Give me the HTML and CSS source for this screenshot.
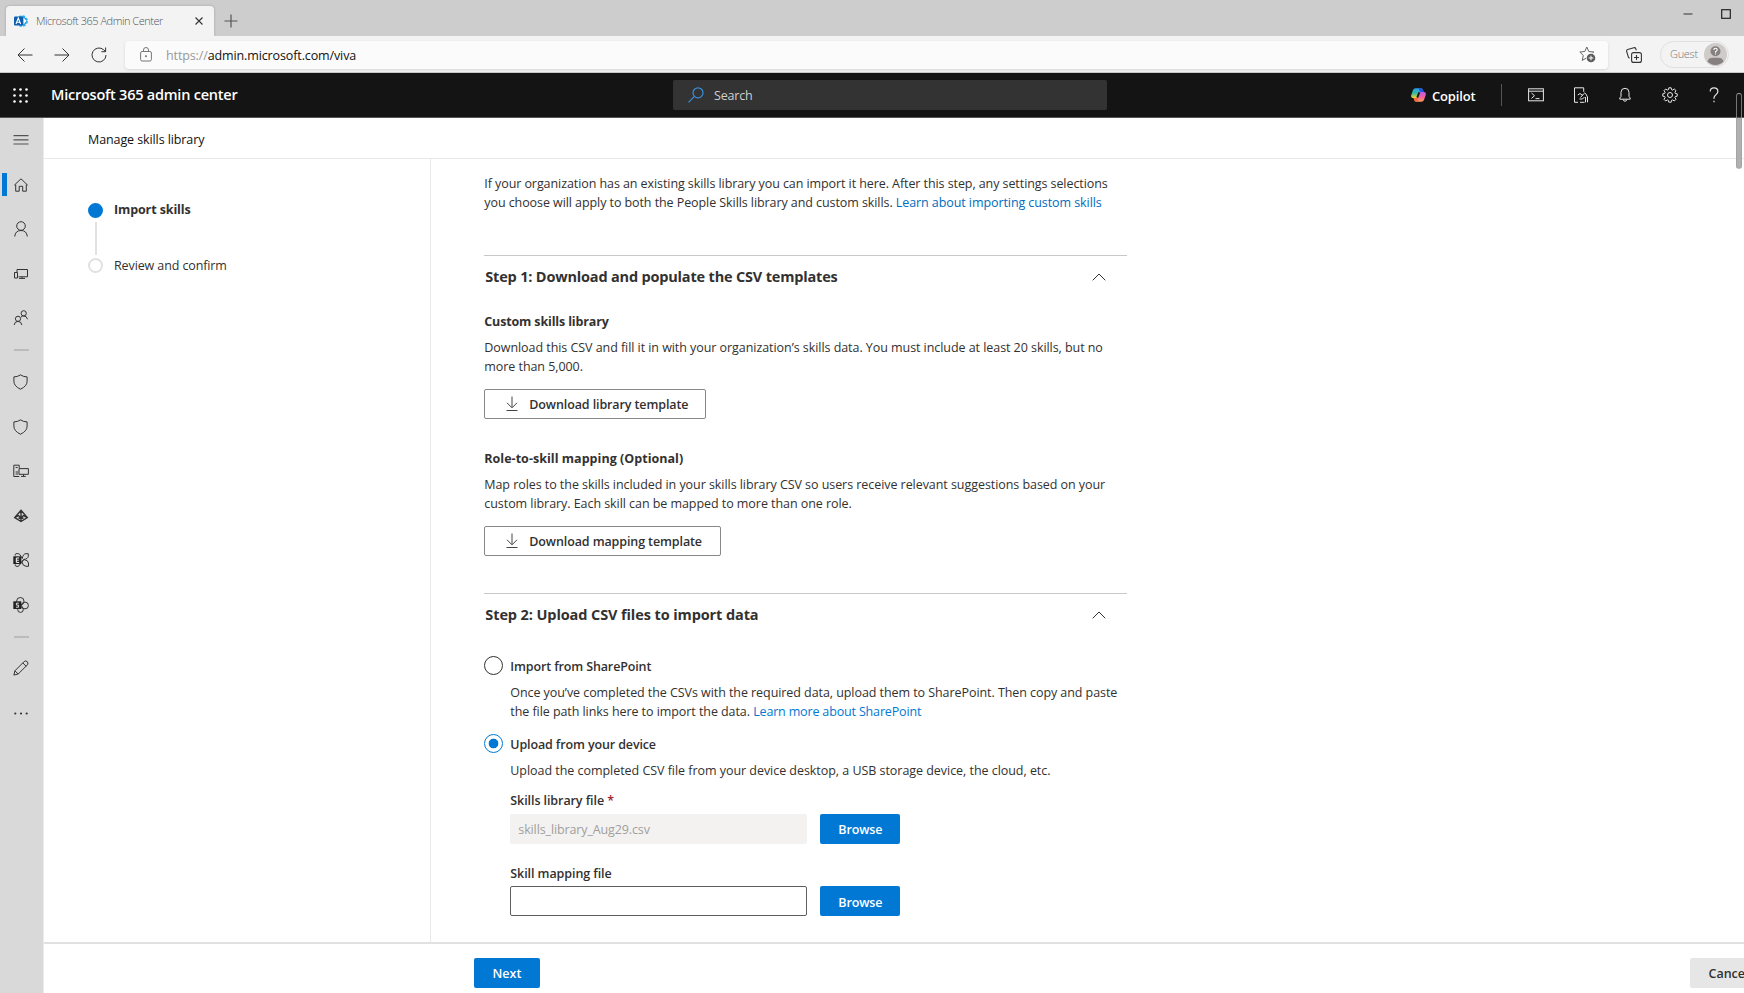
FILE: index.html
```html
<!DOCTYPE html>
<html lang="en">
<head>
    <meta charset="UTF-8">
    <meta name="viewport" content="width=device-width, initial-scale=1.0">
    <title>Microsoft 365 Admin Center</title>
    <link rel="stylesheet" href="styles.css">
</head>
<body>

    <div class="tabstrip">
        <div class="tab">
            <svg class="tab-icon" width="14" height="14" viewBox="0 0 14 14">
                <circle cx="8" cy="7" r="4.6" fill="#2fc4f3" stroke="#2fb4ee" stroke-width="2.6" stroke-dasharray="2.4 1.2"/>
                <circle cx="8.2" cy="7" r="4.4" fill="#1c8fdc"/>
                <path d="M9.5 3.5l3 3.5-3 3.5z" fill="#fff"/>
                <rect x="0" y="2.6" width="9" height="9" rx="1" fill="#0f5fb0"/>
                <path d="M2 10l2.3-6 2.3 6M2.8 8.2h3" fill="none" stroke="#fff" stroke-width="1.1"/>
            </svg>
            <span class="tab-title">Microsoft 365 Admin Center</span>
            <svg width="8" height="8" viewBox="0 0 8 8"><path d="M.5.5l7 7M7.5.5l-7 7" stroke="#333" stroke-width="1.1"/></svg>
        </div>
        <svg class="new-tab" width="14" height="14" viewBox="0 0 14 14"><path d="M7 .5v13M.5 7h13" stroke="#555" stroke-width="1.2"/></svg>
        <div class="window-buttons">
            <svg width="10" height="10" viewBox="0 0 10 10"><path d="M.5 5h9" stroke="#333"/></svg>
            <svg width="10" height="10" viewBox="0 0 10 10"><rect x=".7" y=".7" width="8.6" height="8.6" fill="none" stroke="#222" stroke-width="1.2"/></svg>
        </div>
    </div>

    <div class="toolbar">
        <div class="nav-buttons">
            <svg width="16" height="16" viewBox="0 0 16 16"><path d="M15.5 8H1M7.5 1.5L1 8l6.5 6.5"/></svg>
            <svg width="16" height="16" viewBox="0 0 16 16"><path d="M.5 8H15M8.5 1.5L15 8l-6.5 6.5"/></svg>
            <svg width="16" height="16" viewBox="0 0 16 16"><path d="M15 8a7 7 0 1 1-2.3-5.2L14.5 4.5M14.6.5v4.2h-4.2"/></svg>
        </div>
        <div class="address">
            <svg width="12" height="15" viewBox="0 0 12 15" fill="none" stroke="#777"><rect x=".6" y="4.5" width="10.8" height="9.5" rx="1.5"/><path d="M3.5 4.5V3a2.5 2.5 0 0 1 5 0v1.5"/><circle cx="6" cy="9.2" r=".6" fill="#555"/></svg>
            <span class="url"><span class="scheme">https://</span>admin.microsoft.com/viva</span>
            <svg class="star" width="17" height="17" viewBox="0 0 17 17">
                <path d="M7.8 1l2 4.5 5 .5-3.7 3.4 1 5-4.3-2.6-4.5 2.6 1-5L.8 6l5-.5z" fill="none" stroke="#666"/>
                <circle cx="12" cy="12" r="5" fill="#fbfbfb"/>
                <circle cx="12" cy="12" r="4.3" fill="#5c5c5c"/>
                <path d="M12 9.7v4.6M9.7 12h4.6" stroke="#fff"/>
            </svg>
        </div>
        <svg class="collections" width="16" height="16" viewBox="0 0 16 16" fill="none" stroke="#333" stroke-width="1.1">
            <rect x="5.6" y="5.6" width="9.8" height="9.8" rx="2"/>
            <path d="M10.5 8v5M8 10.5h5M3.6 11.2L2.5 10.5.7 4.6Q.3 3 1.7 2.5L7.8.7Q9.3.4 9.8 1.6L10.3 3.3"/>
        </svg>
        <div class="guest">
            <span>Guest</span>
            <svg width="23" height="23" viewBox="0 0 23 23">
                <circle cx="11.5" cy="11.5" r="11.5" fill="#cfcbc8"/>
                <circle cx="11.5" cy="8.3" r="5" fill="#868180"/>
                <path d="M3.5 18.5c1-3.5 3-3.8 8-3.8s7 .3 8 3.8a11 11 0 0 1-16 0z" fill="#868180"/>
                <path d="M9.8 7q0-1.7 1.7-1.7t1.7 1.5q0 1-1.7 2v.9M11.5 10.5v1" fill="none" stroke="#fff" stroke-width="1.1"/>
            </svg>
        </div>
    </div>

    <header class="suite">
        <svg class="waffle" width="15" height="15" viewBox="0 0 15 15" fill="#fff">
            <circle cx="1.5" cy="1.5" r="1.3"/><circle cx="7.5" cy="1.5" r="1.3"/><circle cx="13.5" cy="1.5" r="1.3"/>
            <circle cx="1.5" cy="7.5" r="1.3"/><circle cx="7.5" cy="7.5" r="1.3"/><circle cx="13.5" cy="7.5" r="1.3"/>
            <circle cx="1.5" cy="13.5" r="1.3"/><circle cx="7.5" cy="13.5" r="1.3"/><circle cx="13.5" cy="13.5" r="1.3"/>
        </svg>
        <span class="suite-name">Microsoft 365 admin center</span>
        <div class="search">
            <svg width="16" height="16" viewBox="0 0 16 16" fill="none" stroke="#3b8edb" stroke-width="1.2"><circle cx="10" cy="5.8" r="5"/><path d="M6.4 9.4L.5 15.3"/></svg>
            <span>Search</span>
        </div>
        <div class="suite-right">
            <div class="copilot">
                <svg width="15" height="14" viewBox="0 0 15 14">
                    <defs>
                        <linearGradient id="cool" x1="0" y1="0" x2="0" y2="1"><stop offset="0" stop-color="#2a9df4"/><stop offset=".5" stop-color="#31b8a0"/><stop offset="1" stop-color="#f4d52c"/></linearGradient>
                        <linearGradient id="warm" x1="0" y1="0" x2="0" y2="1"><stop offset="0" stop-color="#b35cf0"/><stop offset=".5" stop-color="#f2609e"/><stop offset="1" stop-color="#ff9a5a"/></linearGradient>
                    </defs>
                    <path d="M4.5.3H10q1.5 0 2 1.7l.6 2H9.5q-1 0-1.4 1.3L6.7 10H2Q-.4 10 .2 7.3L2 2Q2.7.3 4.5.3z" fill="url(#cool)"/>
                    <path d="M7.5.3H10q1.5 0 2 1.7l.6 2H9.2z" fill="#1f55d6"/>
                    <path d="M10.5 13.7H5.2q-1.5 0-2-1.7L2.6 10h3q1 0 1.4-1.3L8.5 4H13q2.4 0 1.8 2.7L13 12q-.7 1.7-2.5 1.7z" fill="url(#warm)"/>
                    <path d="M2.6 10h3.6l1.3 3.7H5.2q-1.5 0-2-1.7z" fill="#f26a3c"/>
                    <path d="M6.2 9.7L8.3 4.3" stroke="#141414" stroke-width="1.8"/>
                </svg>
                <span>Copilot</span>
            </div>
            <div class="suite-icons">
                <svg width="16" height="14" viewBox="0 0 16 14"><rect x=".6" y=".8" width="14.8" height="12"/><path d="M.6 3.2h14.8M3.5 5l3 2.7-3 2.7M7.5 10.6h4"/></svg>
                <svg width="16" height="16" viewBox="0 0 16 16"><path d="M5 15.3H1.5V.8h9.2v4M7 15.3h4.5M12.5 15.3V10M4.8 8l2.2-1.5 2.8 2M7.5 10.5l3-3.5q1.5-2 2.2-.3L14.5 10v5.3M6.5 12h3l2-2"/></svg>
                <svg width="16" height="16" viewBox="0 0 16 16"><path d="M2.8 12.2V11L4 9.5V5.3a4 4 0 0 1 8 0v4.2l1.2 1.5v1.2zM6.3 12.5a1.7 1.7 0 0 0 3.4 0"/></svg>
                <svg width="16" height="16" viewBox="0 0 16 16"><path d="M6.8.8h2.4l.4 1.9 1 .4 1.7-1.1 1.7 1.7-1.1 1.7.4 1 1.9.4v2.4l-1.9.4-.4 1 1.1 1.7-1.7 1.7-1.7-1.1-1 .4-.4 1.9H6.8l-.4-1.9-1-.4-1.7 1.1L2 12.3l1.1-1.7-.4-1L.8 9.2V6.8l1.9-.4.4-1L2 3.7 3.7 2l1.7 1.1 1-.4z"/><circle cx="8" cy="8" r="2.5"/></svg>
                <svg width="16" height="16" viewBox="0 0 16 16"><path d="M4.2 4.6Q4.2.8 8 .8t3.9 3.5Q11.9 6 10 7.6T8 10.8v1M8 13.8v1.4" stroke-width="1.2"/></svg>
            </div>
        </div>
    </header>

    <div class="app">
        <nav class="rail">
            <div class="rail-item"><svg width="16" height="16" viewBox="0 0 16 16"><path d="M.5 3.7h15M.5 7.9h15"/><path d="M.5 12h15" stroke="#777" stroke-width="1.4"/></svg></div>
            <div class="rail-item active"><svg width="16" height="16" viewBox="0 0 16 16"><path d="M1.3 8.2L8 1.8l6.7 6.4M2.7 7.5v6.7h3.5V9.3h3.5v4.9h3.6V7.5"/></svg></div>
            <div class="rail-item"><svg width="16" height="16" viewBox="0 0 16 16"><circle cx="8" cy="5" r="4.3"/><path d="M1.7 15.5q.6-6 6.3-6t6.3 6"/></svg></div>
            <div class="rail-item"><svg width="16" height="16" viewBox="0 0 16 16"><path d="M4 6V3.5h10.5v7.3H5.5M1.5 6.5h3v5.5h-3zM6 12.4h6M9 10.8v1.6"/></svg></div>
            <div class="rail-item"><svg width="16" height="16" viewBox="0 0 16 16"><circle cx="10.7" cy="3.3" r="2.6"/><circle cx="5" cy="8.8" r="2.6"/><path d="M1.2 15q.3-3.6 3.8-3.6T8.8 15M8 7.2q.8-1.3 2.7-1.3 3 0 3.8 3.3"/></svg></div>
            <div class="rail-line"></div>
            <div class="rail-item"><svg width="16" height="16" viewBox="0 0 16 16"><path d="M7.5.9Q4.5 2.9.9 2.9v4.3q0 5 6.600 8 6.600-3 6.600-8V2.900Q10.500 2.900 7.500.9z"/></svg></div>
            <div class="rail-item"><svg width="16" height="16" viewBox="0 0 16 16"><path d="M7.5.9Q4.5 2.9.9 2.9v4.3q0 5 6.600 8 6.600-3 6.600-8V2.900Q10.500 2.900 7.500.9z"/></svg></div>
            <div class="rail-item"><svg width="16" height="16" viewBox="0 0 16 16"><path d="M6.2 5V2.2H.8v11.3h5.4M6 5.6h9.4v5.7H6zM2.6 4.5h2M2.6 9h2.6M2.6 11h2.6M10.5 11.3v2M8 13.4h4.8"/></svg></div>
            <div class="rail-item"><svg width="16" height="16" viewBox="0 0 16 16"><path d="M8 2.3l6.3 7.2L8 13.5 1.7 9.5zM8 2.5v11M2 9.3l3.6-1.8L8 10l2.4-2.5L14 9.3M5.5 10.3h5" stroke-width="1.4"/></svg></div>
            <div class="rail-item">
                <svg width="16" height="16" viewBox="0 0 16 16"><path d="M9.3 6.5L6.8 2.5Q6 1.6 4.8 1.6H3q-1 .2-.8 2M9.3 6.5Q10 1.7 13 1.7h2.3v2.6Q15 7 10.5 7.5L5.5 14.3H3q-1-.3-.8-2M9 10l2-2.5q4.3.8 4.5 3.5v3.3H13Q9.5 14 9 10z"/><rect x=".3" y="4.3" width="8" height="7.7" fill="#222" stroke="none"/><path d="M6.2 6H3.3v4.4h2.9M3.3 8.2h2.5" stroke="#fff"/></svg>
            </div>
            <div class="rail-item">
                <svg width="16" height="16" viewBox="0 0 16 16"><circle cx="7.3" cy="4.2" r="3.7"/><circle cx="12" cy="8.5" r="3.4"/><circle cx="7.5" cy="12.6" r="2.8"/><rect x=".3" y="4.3" width="8" height="7.7" fill="#222" stroke="none"/><path d="M5.8 6.2H3.4v1.9h2.2v2.1H3" stroke="#ddd"/></svg>
            </div>
            <div class="rail-line"></div>
            <div class="rail-item"><svg width="16" height="16" viewBox="0 0 16 16"><path d="M.9 15.1l1-4.3 9.3-9.3q1.6-1.2 3 .1t.3 3.1l-9.3 9.3zM9.8 2.9l3.4 3.4M1.9 10.8l3.3 3.2"/></svg></div>
            <div class="rail-item"><svg width="16" height="16" viewBox="0 0 16 16"><g fill="#333" stroke="none"><circle cx="2.3" cy="8.5" r="1.1"/><circle cx="8" cy="8.5" r="1.1"/><circle cx="13.7" cy="8.5" r="1.1"/></g></svg></div>
        </nav>

        <div class="page">
            <div class="page-title">Manage skills library</div>

            <div class="page-body">
                <aside class="steps">
                    <div class="step current"><span class="dot"></span><span>Import skills</span></div>
                    <div class="step-line"></div>
                    <div class="step"><span class="dot"></span><span>Review and confirm</span></div>
                </aside>

                <main class="content">
                    <p class="intro">If your organization has an existing skills library you can import it here. After this step, any settings selections<br>you choose will apply to both the People Skills library and custom skills. <a href="#">Learn about importing custom skills</a></p>

                    <section class="section">
                        <div class="section-head download-head">
                            <h2>Step 1: Download and populate the CSV templates</h2>
                            <svg width="14" height="8" viewBox="0 0 14 8"><path d="M.7 7.3L7 1l6.3 6.3"/></svg>
                        </div>
                        <div class="template">
                            <h3>Custom skills library</h3>
                            <p>Download this CSV and fill it in with your organization’s skills data. You must include at least 20 skills, but no<br>more than 5,000.</p>
                            <button class="btn-outline library">
                                <svg width="12" height="16" viewBox="0 0 12 16"><path d="M6 .5v11M1 6.8l5 5 5-5M.5 14.5h11"/></svg>
                                <span>Download library template</span>
                            </button>
                        </div>
                        <div class="template">
                            <h3 class="role-title">Role-to-skill mapping (Optional)</h3>
                            <p>Map roles to the skills included in your skills library CSV so users receive relevant suggestions based on your<br>custom library. Each skill can be mapped to more than one role.</p>
                            <button class="btn-outline mapping">
                                <svg width="12" height="16" viewBox="0 0 12 16"><path d="M6 .5v11M1 6.8l5 5 5-5M.5 14.5h11"/></svg>
                                <span>Download mapping template</span>
                            </button>
                        </div>
                    </section>

                    <section class="section">
                        <div class="section-head">
                            <h2>Step 2: Upload CSV files to import data</h2>
                            <svg width="14" height="8" viewBox="0 0 14 8"><path d="M.7 7.3L7 1l6.3 6.3"/></svg>
                        </div>
                        <div class="option">
                            <span class="radio"></span>
                            <div>
                                <div class="option-label">Import from SharePoint</div>
                                <p>Once you’ve completed the CSVs with the required data, upload them to SharePoint. Then copy and paste<br>the file path links here to import the data. <a href="#" class="bright">Learn more about SharePoint</a></p>
                            </div>
                        </div>
                        <div class="option">
                            <span class="radio checked"></span>
                            <div>
                                <div class="option-label">Upload from your device</div>
                                <p class="hint">Upload the completed CSV file from your device desktop, a USB storage device, the cloud, etc.</p>
                                <div class="field">
                                    <label>Skills library file <span class="required">*</span></label>
                                    <div class="field-row">
                                        <div class="input disabled">skills_library_Aug29.csv</div>
                                        <button class="btn-primary browse">Browse</button>
                                    </div>
                                </div>
                                <div class="field">
                                    <label>Skill mapping file</label>
                                    <div class="field-row">
                                        <div class="input"></div>
                                        <button class="btn-primary browse">Browse</button>
                                    </div>
                                </div>
                            </div>
                        </div>
                    </section>
                </main>
            </div>

            <footer class="footer">
                <button class="btn-primary next">Next</button>
                <button class="btn-cancel">Cancel</button>
            </footer>
        </div>
    </div>

    <div class="scroll-thumb"></div>

</body>
</html>
```

FILE: styles.css
```css
* {
    box-sizing: border-box;
}
body {
    margin: 0;
    width: 1744px;
    height: 993px;
    overflow: hidden;
    display: flex;
    flex-direction: column;
    font-family: "Open Sans", "Noto Sans", sans-serif;
    font-size: 12.5px;
    line-height: 18.6px;
    color: #323130;
    background: #fff;
}
svg {
    display: block;
    flex: none;
}
p, h2, h3 {
    margin: 0;
}
a {
    color: #006cbe;
    text-decoration: none;
}
a.bright {
    color: #0078d4;
    letter-spacing: -0.16px;
}
button {
    font-family: inherit;
    border: none;
    border-radius: 2px;
    padding: 0;
}

/* browser window */
.tabstrip {
    height: 36px;
    flex: none;
    display: flex;
    align-items: flex-end;
    padding-left: 6px;
    background: #cdcdcd;
}
.tab {
    width: 208px;
    height: 30px;
    display: flex;
    align-items: center;
    padding: 0 11px 0 8px;
    background: #f3f3f3;
    border-radius: 4px 4px 0 0;
    box-shadow: 0 0 3px rgba(0, 0, 0, 0.2);
}
.tab-title {
    flex: 1;
    margin-left: 8px;
    font-size: 11px;
    font-weight: 300;
    letter-spacing: -0.47px;
    color: #555;
    white-space: nowrap;
}
.new-tab {
    margin: 0 0 8px 10px;
}
.window-buttons {
    display: flex;
    gap: 28px;
    margin: 0 13px 17px auto;
}
.toolbar {
    height: 37px;
    flex: none;
    display: flex;
    align-items: center;
    padding: 1px 15px 0 17px;
    background: #f3f3f3;
    border-bottom: 1px solid #c8c8c8;
}
.nav-buttons {
    display: flex;
    gap: 21px;
    fill: none;
    stroke: #333;
}
.address {
    width: 1483px;
    height: 28px;
    margin-left: 18px;
    display: flex;
    align-items: center;
    padding: 0 12px 0 15px;
    background: #fbfbfb;
    border-radius: 4px;
    box-shadow: 0 1px 3px rgba(0, 0, 0, 0.12);
}
.url {
    flex: 1;
    margin-left: 14px;
    padding-top: 3px;
    letter-spacing: -0.12px;
    color: #111;
}
.scheme {
    color: #999;
}
.collections {
    margin-left: 18px;
}
.guest {
    width: 69px;
    height: 27px;
    margin-left: auto;
    display: flex;
    align-items: center;
    justify-content: space-between;
    padding: 0 1px 0 9px;
    border: 1px solid #e0e0e0;
    border-radius: 14px;
    font-size: 11px;
    font-weight: 300;
    letter-spacing: -0.3px;
    color: #777;
}

/* suite header */
.suite {
    height: 45px;
    flex: none;
    display: flex;
    align-items: center;
    padding: 0 22px 0 13px;
    background: #141414;
    border-bottom: 1px solid #555;
    color: #fff;
}
.suite-name {
    width: 300px;
    margin-left: 23px;
    font-size: 14.5px;
    font-weight: 600;
    letter-spacing: -0.23px;
}
.search {
    width: 434px;
    height: 30px;
    margin-left: 322px;
    display: flex;
    align-items: center;
    gap: 10px;
    padding-left: 15px;
    background: #333;
    border-radius: 2px;
    color: #d0d0d0;
}
.search span {
    padding-top: 2px;
    letter-spacing: -0.2px;
}
.suite-right {
    margin-left: auto;
    display: flex;
    align-items: center;
}
.copilot {
    width: 91px;
    height: 22px;
    display: flex;
    align-items: center;
    gap: 6px;
    border-right: 1px solid #555;
    font-size: 13px;
    font-weight: 600;
    letter-spacing: -0.15px;
}
.copilot span {
    padding-top: 2px;
}
.suite-icons {
    display: flex;
    align-items: center;
    gap: 28.5px;
    margin-left: 26px;
    fill: none;
    stroke: #e6e6e6;
}

/* left rail */
.app {
    flex: 1;
    min-height: 0;
    display: flex;
}
.rail {
    width: 44px;
    flex: none;
    background: #d9d9d9;
    border-right: 1px solid #ebebeb;
    fill: none;
    stroke: #333;
}
.rail-item {
    height: 44.55px;
    display: flex;
    align-items: center;
    padding-left: 13px;
}
.rail-item.active {
    padding-left: 2px;
}
.rail-item.active::before {
    content: "";
    width: 5px;
    height: 23px;
    margin-right: 6px;
    background: #0078d4;
}
.rail-line {
    height: 2px;
    width: 15px;
    margin: 8.5px 0 8.6px 14px;
    background: #bbb;
}

/* page */
.page {
    flex: 1;
    min-width: 0;
    display: flex;
    flex-direction: column;
}
.page-title {
    height: 41px;
    flex: none;
    padding: 13px 0 0 44px;
    border-bottom: 1px solid #e8e8e8;
    letter-spacing: -0.1px;
    color: #111;
}
.page-body {
    flex: 1;
    min-height: 0;
    display: flex;
}
.steps {
    width: 387px;
    padding: 42px 0 0 44px;
    border-right: 1px solid #e8e8e8;
    letter-spacing: -0.11px;
}
.step {
    display: flex;
    align-items: center;
    gap: 11px;
}
.dot {
    width: 15px;
    height: 15px;
    border: 2px solid #e1e1e1;
    border-radius: 50%;
}
.current {
    font-weight: 700;
}
.current .dot {
    background: #0078d4;
    border-color: #0078d4;
}
.step-line {
    width: 2px;
    height: 33px;
    margin: 2px 0 2px 7px;
    background: #e1e1e1;
}
.content {
    width: 696px;
    padding: 16px 0 0 53.3px;
    white-space: nowrap;
}
.intro {
    margin-bottom: 43px;
    letter-spacing: -0.078px;
}
.section {
    border-top: 1px solid #c8c8c8;
}
.section-head {
    display: flex;
    align-items: center;
    justify-content: space-between;
    padding: 11px 21px 0 1px;
    fill: none;
    stroke: #333;
}
h2 {
    font-size: 14.5px;
    line-height: 20px;
    font-weight: 700;
    letter-spacing: -0.1px;
}
.download-head h2 {
    letter-spacing: -0.18px;
}
h3 {
    font-size: 12.5px;
    line-height: 18.6px;
    font-weight: 700;
    letter-spacing: -0.15px;
}
h3.role-title {
    letter-spacing: 0.03px;
}
.template {
    padding-top: 26px;
}
.template p {
    margin: 7.5px 0 12.5px;
    letter-spacing: -0.057px;
}
.template + .template {
    padding: 31px 0 37px;
}
.btn-outline {
    height: 30px;
    display: flex;
    align-items: center;
    gap: 11px;
    padding-left: 21px;
    background: #fff;
    border: 1px solid #8a8886;
    font-size: 12.5px;
    font-weight: 600;
    letter-spacing: -0.11px;
    color: #323130;
}
.btn-outline svg {
    fill: none;
    stroke: #444;
}
.btn-outline span {
    padding-top: 2px;
}
.library {
    width: 222px;
}
.mapping {
    width: 237px;
}
.option {
    display: flex;
    gap: 7px;
    padding-top: 31px;
    letter-spacing: -0.065px;
}
.option + .option {
    padding-top: 12px;
}
.radio {
    width: 19px;
    height: 19px;
    flex: none;
    border: 1px solid #323130;
    border-radius: 50%;
}
.checked {
    border-color: #0078d4;
    background: radial-gradient(circle, #0078d4 4.5px, #fff 5.2px);
}
.option-label, label {
    font-weight: 600;
}
.option-label {
    padding-top: 2px;
    margin-bottom: 8px;
    letter-spacing: -0.13px;
}
.hint {
    letter-spacing: -0.04px;
}
.field {
    padding-top: 11.5px;
}
.field + .field {
    padding-top: 21px;
}
label {
    display: block;
    margin-bottom: 3px;
    letter-spacing: -0.08px;
}
.required {
    color: #a4262c;
}
.field-row {
    display: flex;
    gap: 13px;
}
.input {
    width: 297px;
    height: 30px;
    padding: 6px 7px;
    border: 1px solid #605e5c;
    border-radius: 2px;
    letter-spacing: -0.12px;
}
.input.disabled {
    background: #f3f2f1;
    border-color: #f3f2f1;
    color: #a19f9d;
}
.btn-primary {
    width: 80px;
    height: 30px;
    background: #0078d4;
    color: #fff;
    font-size: 12.5px;
    font-weight: 600;
}
.browse {
    padding-top: 2px;
    letter-spacing: -0.15px;
}
.footer {
    height: 51px;
    flex: none;
    display: flex;
    justify-content: space-between;
    padding: 14px 0 0 430px;
    border-top: 2px solid #e1e1e1;
    background: #fff;
}
.next {
    width: 66px;
}
.btn-cancel {
    width: 77px;
    height: 30px;
    margin-right: -23px;
    background: #e6e6e6;
    font-size: 12.5px;
    font-weight: 600;
    color: #323130;
}

/* overlay scrollbar */
.scroll-thumb {
    position: absolute;
    left: 1736px;
    top: 93px;
    width: 6px;
    height: 76px;
    border: 1px solid rgba(160, 160, 160, 0.7);
    border-radius: 3px;
    background: linear-gradient(transparent 24px, #b0b0b0 24px);
}
```
